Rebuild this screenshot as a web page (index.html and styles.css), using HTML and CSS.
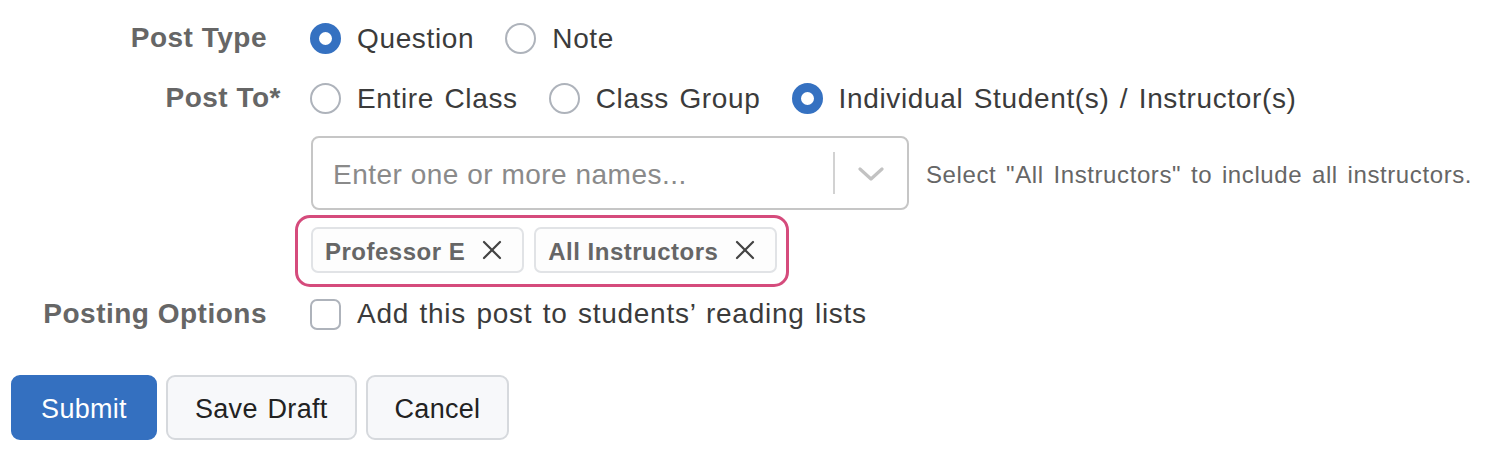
FILE: index.html
```html
<!DOCTYPE html>
<html>
<head>
<meta charset="utf-8">
<link rel="stylesheet" href="styles.css">
</head>
<body>
<form class="form">
  <div class="row row-radio">
    <div class="label">Post Type</div>
    <div class="options">
      <label class="opt"><span class="radio checked"></span><span class="opt-text">Question</span></label>
      <label class="opt"><span class="radio"></span><span class="opt-text">Note</span></label>
    </div>
  </div>
  <div class="row row-radio">
    <div class="label">Post To<span class="req">*</span></div>
    <div class="options">
      <label class="opt"><span class="radio"></span><span class="opt-text">Entire Class</span></label>
      <label class="opt"><span class="radio"></span><span class="opt-text">Class Group</span></label>
      <label class="opt"><span class="radio checked"></span><span class="opt-text">Individual Student(s) / Instructor(s)</span></label>
    </div>
  </div>
  <div class="row row-select">
    <div class="label"></div>
    <div class="select">
      <span class="placeholder">Enter one or more names...</span>
      <span class="sep"></span>
      <span class="chev">
        <svg width="26" height="16" viewBox="0 0 26 16"><path d="M2 3 L13 13 L24 3" fill="none" stroke="#c2c2c2" stroke-width="3.2" stroke-linecap="round" stroke-linejoin="round"/></svg>
      </span>
    </div>
    <div class="help">Select "All Instructors" to include all instructors.</div>
  </div>
  <div class="row row-chips">
    <div class="label label-chips"></div>
    <div class="chips">
      <span class="chip"><span class="chip-text">Professor E</span><svg class="x" width="20" height="20" viewBox="0 0 20 20"><path d="M2 2 L18 18 M18 2 L2 18" stroke="#444" stroke-width="2.2" stroke-linecap="round"/></svg></span>
      <span class="chip"><span class="chip-text">All Instructors</span><svg class="x" width="20" height="20" viewBox="0 0 20 20"><path d="M2 2 L18 18 M18 2 L2 18" stroke="#444" stroke-width="2.2" stroke-linecap="round"/></svg></span>
    </div>
  </div>
  <div class="row row-check">
    <div class="label">Posting Options</div>
    <label class="opt"><span class="checkbox"></span><span class="opt-text">Add this post to students’ reading lists</span></label>
  </div>
  <div class="buttons">
    <button type="button" class="btn btn-primary">Submit</button>
    <button type="button" class="btn">Save Draft</button>
    <button type="button" class="btn">Cancel</button>
  </div>
</form>
</body>
</html>
```
FILE: styles.css
```css
html, body {
  margin: 0;
  padding: 0;
  background: #ffffff;
}
body {
  font-family: "Liberation Sans", Arial, Helvetica, sans-serif;
  color: #3b3b3b;
  width: 1490px;
  height: 454px;
  overflow: hidden;
}
.form {
  padding-top: 8px;
}
.row {
  display: flex;
  align-items: center;
}
.label {
  width: 267px;
  flex: none;
  margin-right: 43px;
  text-align: right;
  font-weight: bold;
  font-size: 28px;
  letter-spacing: 0.5px;
  color: #666666;
}
.req {
  margin-right: -14px;
}
.row-radio {
  height: 60px;
}
.row-radio .opt-text {
  padding-top: 2px;
}
.options {
  display: flex;
  align-items: center;
  gap: 31px;
}
.opt {
  display: flex;
  align-items: center;
  gap: 16px;
}
.opt-text {
  font-size: 28px;
  letter-spacing: 0.65px;
  word-spacing: 2px;
  color: #3b3b3b;
}
.row-check .opt-text {
  letter-spacing: 0.72px;
}
.radio {
  width: 31px;
  height: 31px;
  box-sizing: border-box;
  border: 2px solid #aeb3bb;
  border-radius: 50%;
  flex: none;
  background: #fff;
}
.radio.checked {
  border: 9px solid #3571c1;
}
.row-select {
  margin-top: 8px;
}
.select {
  margin-left: 1px;
  width: 598px;
  height: 74px;
  box-sizing: border-box;
  border: 2px solid #c6c6c6;
  border-radius: 8px;
  display: flex;
  align-items: center;
  padding-left: 20px;
}
.placeholder {
  font-size: 28px;
  letter-spacing: 0.5px;
  color: #8a8a8a;
  flex: 1;
  padding-top: 4px;
}
.sep {
  width: 2px;
  height: 42px;
  background: #d2d2d2;
}
.chev {
  width: 72px;
  display: flex;
  justify-content: center;
  align-items: center;
  padding-top: 2px;
}
.help {
  margin-left: 17px;
  font-size: 24px;
  letter-spacing: 0.6px;
  word-spacing: 2.5px;
  color: #666666;
  padding-top: 3px;
}
.row-chips {
  margin-top: 5px;
}
.label-chips {
  margin-right: 28px;
}
.chips {
  display: flex;
  gap: 10px;
  border: 3px solid #d54b7c;
  border-radius: 15px;
  padding: 9px 9px 11px 13px;
}
.chip {
  display: flex;
  align-items: center;
  height: 46px;
  box-sizing: border-box;
  border: 2px solid #e1e3e6;
  border-radius: 7px;
  background: #fdfdfd;
  padding: 0 20px 0 12px;
}
.chip-text {
  font-size: 24px;
  font-weight: bold;
  letter-spacing: 0.5px;
  color: #666666;
  padding-top: 3px;
}
.x {
  margin-left: 17px;
}
.row-check {
  margin-top: 7px;
  height: 40px;
}
.checkbox {
  width: 31px;
  height: 31px;
  box-sizing: border-box;
  border: 2px solid #aeb3bb;
  border-radius: 7px;
  background: #fff;
  flex: none;
}
.buttons {
  margin-top: 41px;
  margin-left: 11px;
  display: flex;
  gap: 9px;
}
.btn {
  height: 65px;
  box-sizing: border-box;
  border: 2px solid #d6d9dd;
  border-radius: 9px;
  background: #f7f8fa;
  font-family: "Liberation Sans", Arial, Helvetica, sans-serif;
  font-size: 27px;
  letter-spacing: 0.3px;
  word-spacing: 2px;
  color: #222222;
  padding: 4px 27px 0;
  margin: 0;
}
.btn-primary {
  background: #3470c0;
  border-color: #3470c0;
  color: #ffffff;
  width: 146px;
  padding: 4px 0 0;
}
```
